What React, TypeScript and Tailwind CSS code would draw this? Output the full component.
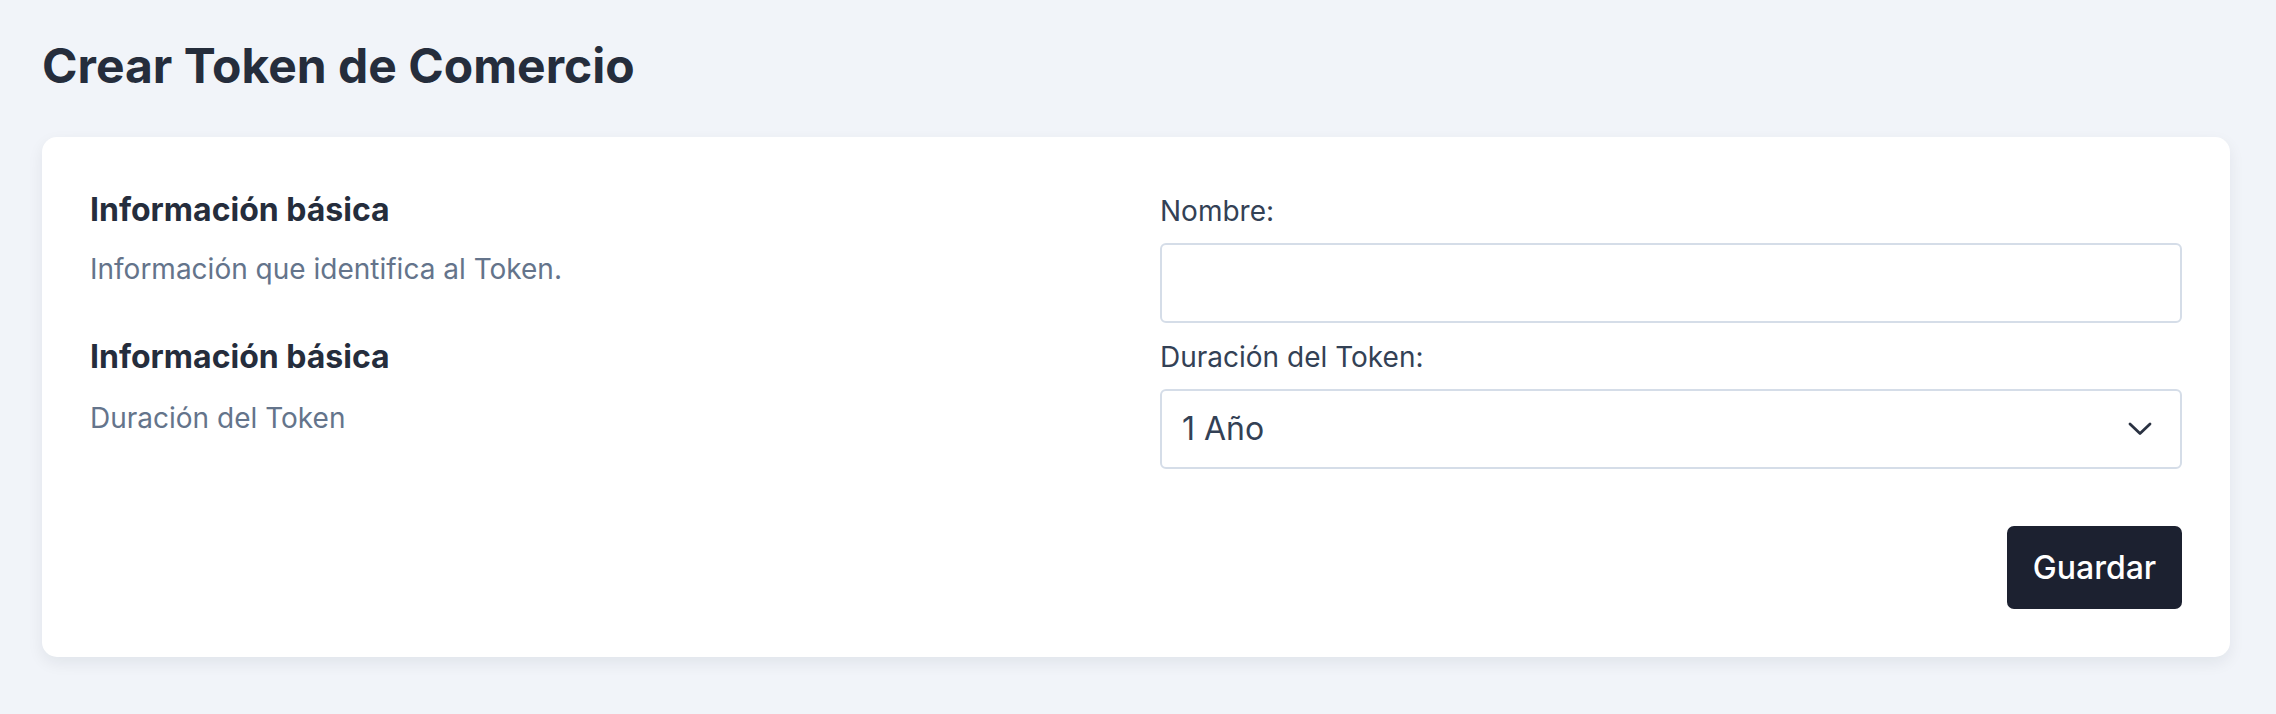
import { useState } from 'react';

function ChevronDown() {
  return (
    <svg
      className="w-[24px] h-[14px] text-[#2a3242]"
      viewBox="0 0 24 14"
      fill="none"
      stroke="currentColor"
      strokeWidth={2.8}
      strokeLinecap="round"
      strokeLinejoin="round"
    >
      <path d="M2 2l10 9.5L22 2" />
    </svg>
  );
}

export default function App() {
  const [name, setName] = useState('');
  const [duration, setDuration] = useState('1');

  return (
    <div
      className="min-h-screen bg-[#f1f4f9] pl-[42px] pr-[46px] pt-[42px] pb-[42px] text-[#1e293b]"
      style={{ fontFamily: 'Inter, "Noto Sans", sans-serif' }}
    >
      <h1 className="text-[48px] leading-[48px] font-bold text-[#252d3c]">
        Crear Token de Comercio
      </h1>

      <div className="mt-[47px] bg-white rounded-[15px] shadow-[0_6px_16px_rgba(15,23,42,0.07)] px-[48px] pt-[48px] pb-[48px]">
        <div className="grid grid-cols-2 gap-[48px]">
          {/* left column */}
          <div className="pt-[5px] flex flex-col gap-[50px]">
            <div>
              <h3 className="text-[32px] leading-[40px] font-bold text-[#252d3c]">
                Información básica
              </h3>
              <p className="mt-[21px] text-[28px] leading-[36px] text-[#64748b]">
                Información que identifica al Token.
              </p>
            </div>
            <div>
              <h3 className="text-[32px] leading-[40px] font-bold text-[#252d3c]">
                Información básica
              </h3>
              <p className="mt-[23px] text-[28px] leading-[36px] text-[#64748b]">
                Duración del Token
              </p>
            </div>
          </div>

          {/* right column */}
          <div className="pt-[8px] flex flex-col">
            <label className="text-[28px] leading-[36px] text-[#334155]">Nombre:</label>
            <input
              value={name}
              onChange={(e) => setName(e.target.value)}
              className="mt-[14px] h-[80px] w-full rounded-[6px] border-2 border-[#d5dde8] bg-white px-[20px] text-[32px] text-[#334155] outline-none"
            />
            <label className="mt-[16px] text-[28px] leading-[36px] text-[#334155]">
              Duración del Token:
            </label>
            <div className="relative mt-[14px]">
              <select
                value={duration}
                onChange={(e) => setDuration(e.target.value)}
                className="appearance-none h-[80px] w-full rounded-[6px] border-2 border-[#d5dde8] bg-white pl-[20px] pr-[60px] text-[32px] text-[#334155] outline-none"
              >
                <option value="1">1 Año</option>
                <option value="2">2 Años</option>
                <option value="3">3 Años</option>
              </select>
              <span className="pointer-events-none absolute right-[30px] top-1/2 -translate-y-1/2 flex">
                <ChevronDown />
              </span>
            </div>
            <div className="mt-[57px] flex justify-end">
              <button className="h-[83px] w-[175px] rounded-[7px] bg-[#1c2130] text-white text-[32px] font-medium">
                Guardar
              </button>
            </div>
          </div>
        </div>
      </div>
    </div>
  );
}
